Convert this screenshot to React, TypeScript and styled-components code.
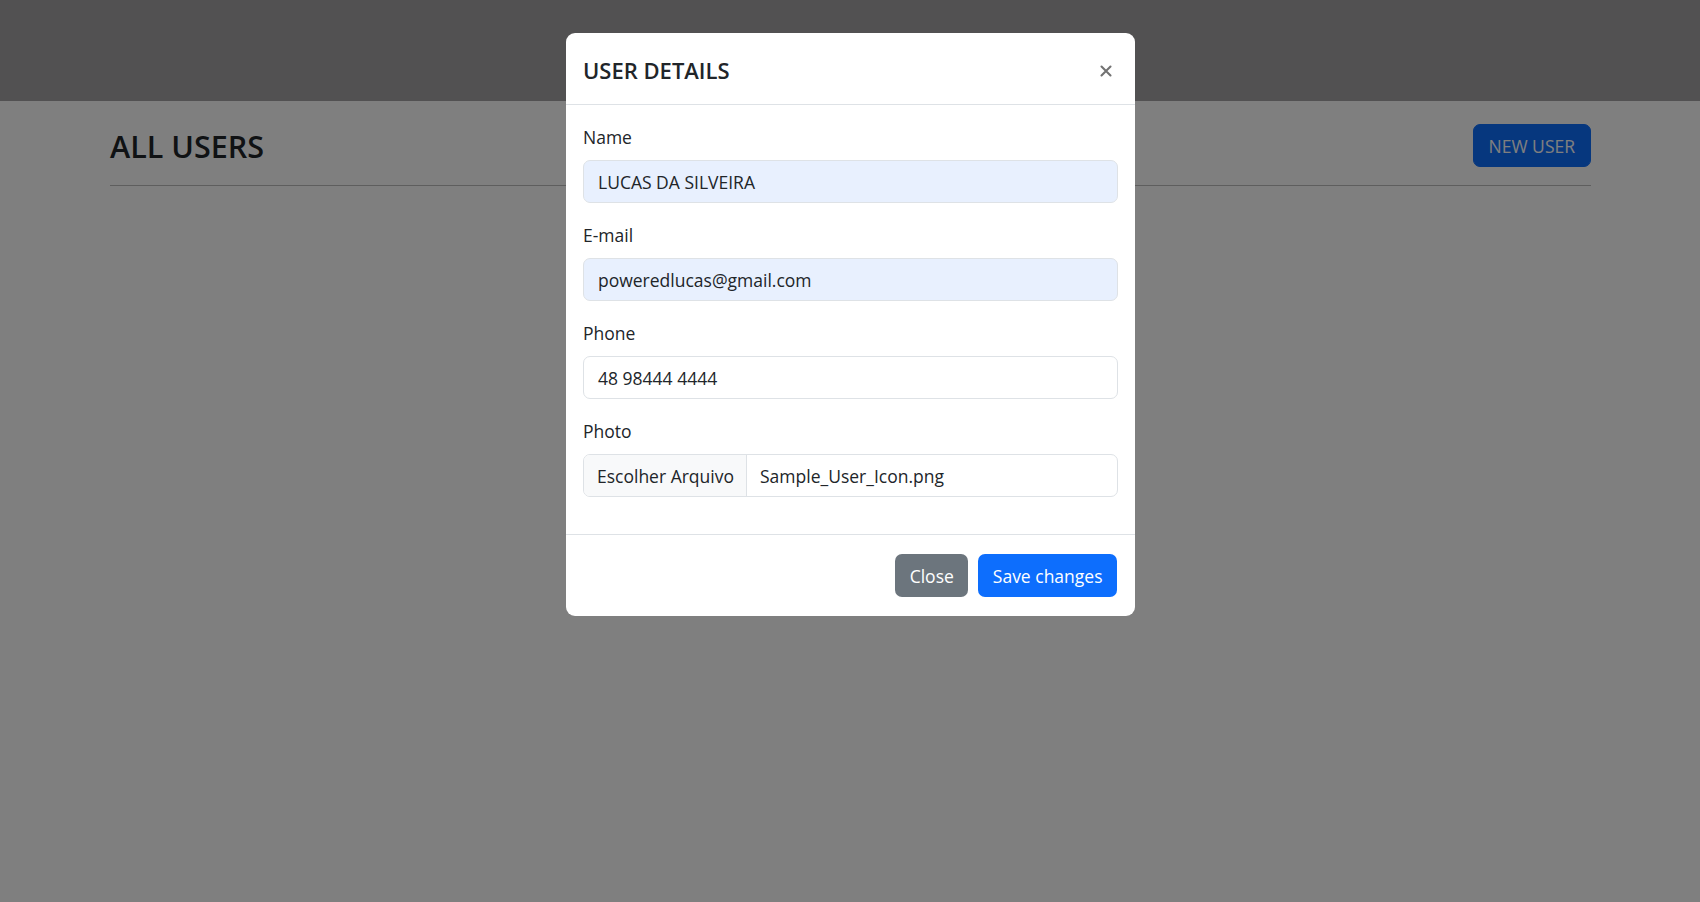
import React from "react";
import styled, { createGlobalStyle } from "styled-components";

const Global = createGlobalStyle`
  html, body { margin: 0; padding: 0; }
  body {
    font-family: "Open Sans", "Noto Sans", "Liberation Sans", sans-serif;
    background: #ffffff;
    color: #212529;
    height: 902px;
    overflow: hidden;
  }
`;

const Page = styled.div`
  width: 1700px;
  height: 902px;
  position: relative;
`;

const Navbar = styled.div`
  height: 101px;
  background: #a5a3a5;
`;

const Container = styled.div`
  padding: 0 109px 0 110px;
`;

const HeaderRow = styled.div`
  display: flex;
  align-items: center;
  justify-content: space-between;
  padding-top: 23px;
  padding-bottom: 18px;
  border-bottom: 1px solid #bcbcbc;
`;

const PageTitle = styled.h2`
  margin: 0;
  font-size: 30.5px;
  font-weight: 600;
  line-height: 42px;
  color: #212529;
`;

const PrimaryButton = styled.button`
  height: 43px;
  padding: 0 15px;
  border: 1px solid #0d6efd;
  border-radius: 7px;
  background: #0d6efd;
  color: #ffffff;
  font-family: inherit;
  font-size: 17.5px;
  cursor: pointer;
`;

const Backdrop = styled.div`
  position: absolute;
  inset: 0;
  background: rgba(0, 0, 0, 0.5);
  display: flex;
  justify-content: center;
  align-items: flex-start;
  padding-top: 33px;
  box-sizing: border-box;
`;

const Modal = styled.div`
  width: 569px;
  margin-left: 1px;
  background: #ffffff;
  border-radius: 9px;
  overflow: hidden;
`;

const ModalHeader = styled.div`
  display: flex;
  align-items: center;
  justify-content: space-between;
  height: 71px;
  padding: 0 17px;
  border-bottom: 1px solid #dee2e6;
`;

const ModalTitle = styled.h5`
  margin: 3px 0 0;
  font-size: 22px;
  font-weight: 600;
  line-height: 1.5;
  color: #212529;
`;

const CloseX = styled.button`
  width: 25px;
  height: 25px;
  padding: 0;
  border: 0;
  background: transparent;
  display: flex;
  align-items: center;
  justify-content: center;
  opacity: 0.55;
  cursor: pointer;
  margin-top: 4px;
`;

const ModalBody = styled.div`
  padding: 19px 17px 37px;
`;

const Group = styled.div`
  margin-bottom: 19px;
  &:last-child { margin-bottom: 0; }
`;

const Label = styled.label`
  display: block;
  font-size: 17.5px;
  line-height: 27px;
  margin-bottom: 9px;
  color: #212529;
`;

const Input = styled.div<{ $autofill?: boolean }>`
  height: 43px;
  box-sizing: border-box;
  display: flex;
  align-items: center;
  padding: 0 14px;
  border: 1px solid #dee2e6;
  border-radius: 7px;
  background: ${(p) => (p.$autofill ? "#e8f0fe" : "#ffffff")};
  font-size: 17.5px;
  color: #212529;
`;

const FileInput = styled.div`
  height: 43px;
  box-sizing: border-box;
  display: flex;
  border: 1px solid #dee2e6;
  border-radius: 7px;
  overflow: hidden;
  font-size: 17.5px;
  color: #212529;
`;

const FileButton = styled.div`
  width: 163px;
  box-sizing: border-box;
  display: flex;
  align-items: center;
  padding-left: 13px;
  background: #f8f9fa;
  border-right: 1px solid #dee2e6;
`;

const FileName = styled.div`
  display: flex;
  align-items: center;
  padding-left: 13px;
`;

const ModalFooter = styled.div`
  display: flex;
  justify-content: flex-end;
  gap: 10px;
  padding: 19px 18px 19px;
  border-top: 1px solid #dee2e6;
`;

const FooterButton = styled.button<{ $variant: "secondary" | "primary" }>`
  height: 43px;
  padding: 0 14.5px;
  border: 0;
  border-radius: 7px;
  background: ${(p) => (p.$variant === "primary" ? "#0d6efd" : "#6c757d")};
  color: #ffffff;
  font-family: inherit;
  font-size: 17.5px;
  cursor: pointer;
`;

export default function App() {
  return (
    <>
      <Global />
      <Page>
        <Navbar />
        <Container>
          <HeaderRow>
            <PageTitle>ALL USERS</PageTitle>
            <PrimaryButton>NEW USER</PrimaryButton>
          </HeaderRow>
        </Container>
        <Backdrop>
          <Modal>
            <ModalHeader>
              <ModalTitle>USER DETAILS</ModalTitle>
              <CloseX aria-label="Close">
                <svg width="12" height="12" viewBox="0 0 16 16">
                  <path d="M2 2 L14 14 M14 2 L2 14" stroke="#000" strokeWidth="2.8" strokeLinecap="round" />
                </svg>
              </CloseX>
            </ModalHeader>
            <ModalBody>
              <Group>
                <Label>Name</Label>
                <Input $autofill>LUCAS DA SILVEIRA</Input>
              </Group>
              <Group>
                <Label>E-mail</Label>
                <Input $autofill>poweredlucas@gmail.com</Input>
              </Group>
              <Group>
                <Label>Phone</Label>
                <Input>48 98444 4444</Input>
              </Group>
              <Group>
                <Label>Photo</Label>
                <FileInput>
                  <FileButton>Escolher Arquivo</FileButton>
                  <FileName>Sample_User_Icon.png</FileName>
                </FileInput>
              </Group>
            </ModalBody>
            <ModalFooter>
              <FooterButton $variant="secondary">Close</FooterButton>
              <FooterButton $variant="primary">Save changes</FooterButton>
            </ModalFooter>
          </Modal>
        </Backdrop>
      </Page>
    </>
  );
}
